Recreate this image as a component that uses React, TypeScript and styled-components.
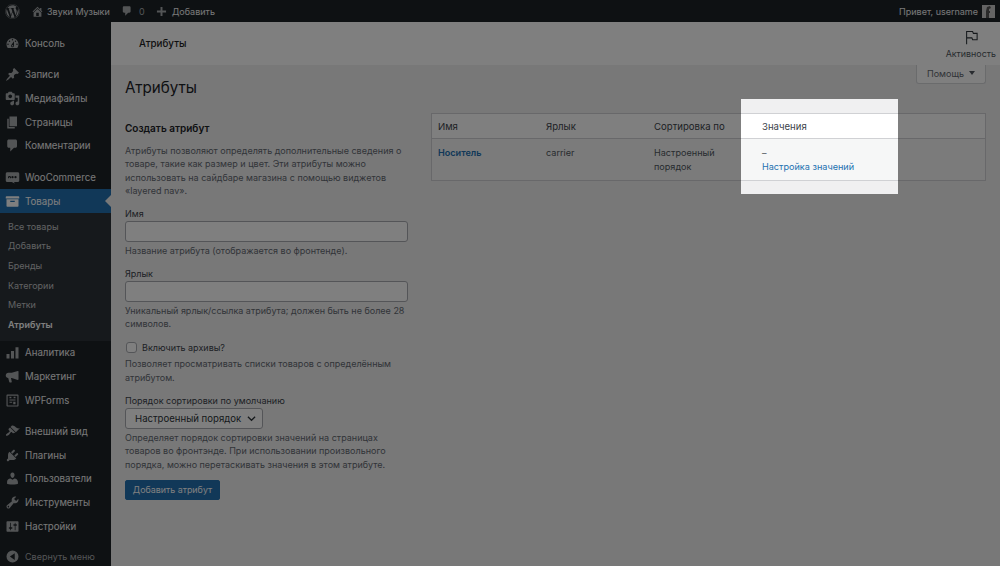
import React from "react";
import styled, { createGlobalStyle } from "styled-components";
import { FaWordpress } from "react-icons/fa";

const GlobalStyle = createGlobalStyle`
  html, body {
    margin: 0;
    padding: 0;
    background: #f0f0f1;
  }
  body {
    font-family: Inter, "Liberation Sans", sans-serif;
    font-size: 9px;
    color: #3c434a;
  }
  * {
    box-sizing: border-box;
  }
`;

const paths: Record<string, string> = {
  dashboard:
    "M3.76 16h12.48c1.1-1.37 1.76-3.11 1.76-5 0-4.42-3.58-8-8-8s-8 3.58-8 8c0 1.89.66 3.63 1.76 5zM10 4c.55 0 1 .45 1 1s-.45 1-1 1-1-.45-1-1 .45-1 1-1zM6 6c.55 0 1 .45 1 1s-.45 1-1 1-1-.45-1-1 .45-1 1-1zm8 0c.55 0 1 .45 1 1s-.45 1-1 1-1-.45-1-1 .45-1 1-1zm-5.37 5.55L12 7v6c0 1.1-.9 2-2 2s-2-.9-2-2c0-.57.24-1.08.63-1.45zM4 10c.55 0 1 .45 1 1s-.45 1-1 1-1-.45-1-1 .45-1 1-1zm12 0c.55 0 1 .45 1 1s-.45 1-1 1-1-.45-1-1 .45-1 1-1zm-5 3c0-.55-.45-1-1-1s-1 .45-1 1 .45 1 1 1 1-.45 1-1z",
  post: "M10.44 3.02l1.82-1.82 6.36 6.35-1.83 1.82c-1.05-.68-2.48-.57-3.41.36l-.75.75c-.92.93-1.04 2.35-.35 3.41l-1.83 1.82-2.41-2.41-2.8 2.79c-.42.42-3.38 2.71-3.8 2.29s1.86-3.39 2.28-3.81l2.79-2.79L4.1 9.36l1.83-1.82c1.05.69 2.48.57 3.4-.36l.75-.75c.93-.92 1.05-2.35.36-3.41z",
  media:
    "M13 11V4c0-.55-.45-1-1-1h-1.67L9 1H5L3.67 3H2c-.55 0-1 .45-1 1v7c0 .55.45 1 1 1h10c.55 0 1-.45 1-1zM7 4.5c1.38 0 2.5 1.12 2.5 2.5S8.38 9.5 7 9.5 4.5 8.38 4.5 7 5.62 4.5 7 4.5zM14 6h5v10.5c0 1.38-1.12 2.5-2.5 2.5S14 17.88 14 16.5s1.12-2.5 2.5-2.5c.17 0 .34.02.5.05V9h-3V6zm-4 8.05V13h2v3.5c0 1.38-1.12 2.5-2.5 2.5S7 17.88 7 16.5 8.12 14 9.5 14c.17 0 .34.02.5.05z",
  page: "M6 15V2h10v13H6zm-1 1h8v2H3V5h2v11z",
  comments:
    "M5 2h9c1.1 0 2 .9 2 2v7c0 1.1-.9 2-2 2h-2l-5 5v-5H5c-1.1 0-2-.9-2-2V4c0-1.1.9-2 2-2z",
  woo: "M3 3h14c1.1 0 2 .9 2 2v9c0 1.1-.9 2-2 2h-5l1 2-4-2H3c-1.1 0-2-.9-2-2V5c0-1.1.9-2 2-2zm1 5v3h1l1-2 1 2h1V8H7.500v1.500L6.500 8h-1L4.700 9.500V8zm6 0a1.500 1.500 0 100 3 1.500 1.500 0 000-3zm4 0a1.500 1.500 0 100 3 1.500 1.500 0 000-3z",
  products:
    "M2 3h16c.55 0 1 .45 1 1v2H1V4c0-.55.45-1 1-1zm0 4h16v9c0 .55-.45 1-1 1H3c-.55 0-1-.45-1-1V7zm5 2v1.500h6V9H7z",
  analytics: "M2 12h4v6H2v-6zm6-4h4v10H8V8zm6-5h4v15h-4V3z",
  marketing:
    "M18 3v11l-1 .5L9 12H8l1 5c.1.5-.2 1-.8 1H6.500c-.4 0-.7-.3-.8-.6L4.300 12C2.500 11.800 1 10.300 1 8.500S2.500 5 4.500 5H9l8-2.500L18 3z",
  wpforms:
    "M3 2h14c.55 0 1 .45 1 1v14c0 .55-.45 1-1 1H3c-.55 0-1-.45-1-1V3c0-.55.45-1 1-1zm.5 1.500v13h13v-13h-13zM6 5h2.500v2H6V5zm5.500 0H14v2h-2.500V5zM6 8.500h8V10H6V8.500zM6 11.500h3.500V13H6v-1.500zm5 0h3V15h-3v-3.500z",
  appearance:
    "M14.48 11.06L7.41 3.99l1.5-1.5c.5-.56 2.3-.47 3.51.32 1.21.8 1.43 1.28 2.91 2.1 1.18.64 2.45 1.26 4.45.85zm-.71.71L6.7 4.7 4.93 6.47c-.39.39-.39 1.02 0 1.41l1.06 1.06c.39.39.39 1.03 0 1.42-.6.6-1.43 1.11-2.21 1.69-.35.26-.7.53-1.01.84C1.43 13.23.91 14.8 1.6 15.5c.69.69 2.29.16 3.63-1.17.31-.31.58-.67.84-1.02.58-.78 1.09-1.61 1.69-2.21.39-.39 1.03-.39 1.42 0l1.06 1.06c.39.39 1.02.39 1.41 0z",
  plugins:
    "M13.11 4.36L9.87 7.6 8 5.73l3.24-3.24c.35-.34 1.05-.2 1.56.32.52.51.66 1.21.31 1.55zm-8 1.77l.91-1.12 9.01 9.01-1.19.84c-.71.71-2.63 1.16-3.82 1.16H6.14L4.9 17.26c-.59.59-1.54.59-2.12 0-.59-.58-.59-1.53 0-2.12l1.24-1.24v-3.88c0-1.13.4-3.19 1.09-3.89zm7.26 3.97l3.24-3.24c.34-.35 1.04-.21 1.55.31.52.51.66 1.21.31 1.55l-3.24 3.25z",
  users:
    "M10 9.25c-2.27 0-2.73-3.44-2.73-3.44C7 4.02 7.82 2 9.97 2c2.16 0 2.98 2.02 2.71 3.81 0 0-.41 3.44-2.68 3.44zm0 2.57L12.72 10c2.39 0 4.52 2.33 4.52 4.53v2.49s-3.65 1.13-7.24 1.13c-3.65 0-7.24-1.13-7.24-1.13v-2.49c0-2.25 1.94-4.48 4.47-4.48z",
  tools:
    "M16.68 9.77c-1.34 1.34-3.3 1.67-4.95.99l-5.41 6.52c-.99.99-2.59.99-3.58 0s-.99-2.59 0-3.57l6.52-5.42c-.68-1.65-.35-3.61.99-4.95 1.28-1.28 3.12-1.62 4.72-1.06l-2.89 2.89 2.82 2.82 2.86-2.87c.53 1.58.18 3.39-1.08 4.65zM3.81 16.21c.4.39 1.04.39 1.43 0 .4-.4.4-1.04 0-1.43-.39-.4-1.03-.4-1.43 0-.39.39-.39 1.03 0 1.43z",
  settings:
    "M18 16V4c0-.55-.45-1-1-1H3c-.55 0-1 .45-1 1v12c0 .55.45 1 1 1h14c.55 0 1-.45 1-1zM8 11h1c.55 0 1 .45 1 1s-.45 1-1 1H8v1.500c0 .28-.22.5-.5.5s-.5-.22-.5-.5V13H6c-.55 0-1-.45-1-1s.45-1 1-1h1V5.500c0-.28.22-.5.5-.5s.5.22.5.5V11zm5-2h-1c-.55 0-1-.45-1-1s.45-1 1-1h1V5.500c0-.28.22-.5.5-.5s.5.22.5.5V7h1c.55 0 1 .45 1 1s-.45 1-1 1h-1v5.500c0 .28-.22.5-.5.5s-.5-.22-.5-.5V9z",
  collapse: "M10 2a8 8 0 100 16 8 8 0 000-16zm3 3.500v9L6.500 10 13 5.500z",
  home: "M16 8.500l1.530 1.530-1.060 1.060L10 4.620l-6.470 6.470-1.060-1.060L10 2.500l4 4v-2h2v4zm-6-2.460l6 5.990V18H4v-5.970zM12 17v-5H8v5h4z",
  plus: "M17 8.500v3h-5.500V17h-3v-5.500H3v-3h5.500V3h3v5.500H17z",
};

const Icon = ({ name, size = 15 }: { name: string; size?: number }) => (
  <svg width={size} height={size} viewBox="0 0 20 20" fill="currentColor">
    <path fillRule="evenodd" d={paths[name]} />
  </svg>
);

const topMenu = [
  { icon: "dashboard", label: "Консоль" },
  { icon: "post", label: "Записи", gap: true },
  { icon: "media", label: "Медиафайлы" },
  { icon: "page", label: "Страницы" },
  { icon: "comments", label: "Комментарии" },
  { icon: "woo", label: "WooCommerce", gap: true },
];

const bottomMenu = [
  { icon: "analytics", label: "Аналитика" },
  { icon: "marketing", label: "Маркетинг" },
  { icon: "wpforms", label: "WPForms" },
  { icon: "appearance", label: "Внешний вид", gap: true },
  { icon: "plugins", label: "Плагины" },
  { icon: "users", label: "Пользователи" },
  { icon: "tools", label: "Инструменты" },
  { icon: "settings", label: "Настройки" },
];

const subMenu = ["Все товары", "Добавить", "Бренды", "Категории", "Метки", "Атрибуты"];

const App = () => {
  return (
    <S.Page>
      <GlobalStyle />
      <S.AdminBar>
        <S.BarGroup>
          <S.BarLogo>
            <FaWordpress size={15} />
          </S.BarLogo>
          <S.BarItem $width={90} $gap={3}>
            <Icon name="home" size={13} />
            <span>Звуки Музыки</span>
          </S.BarItem>
          <S.BarItem $width={34} $gap={6} $muted>
            <Icon name="comments" size={12} />
            <span>0</span>
          </S.BarItem>
          <S.BarItem $width={70} $gap={4}>
            <Icon name="plus" size={13} />
            <span>Добавить</span>
          </S.BarItem>
        </S.BarGroup>
        <S.Greeting>
          <span>Привет, username</span>
          <S.Avatar>
            <svg width="13" height="13" viewBox="0 0 13 13">
              <path fill="#555" d="M4 13V6l1-4 3-1 1 2-2 1v2h1v2H7v5z" />
            </svg>
          </S.Avatar>
        </S.Greeting>
      </S.AdminBar>

      <S.Body>
        <S.Sidebar>
          {topMenu.map((item) => (
            <S.MenuItem key={item.label} $gap={item.gap}>
              <Icon name={item.icon} />
              <span>{item.label}</span>
            </S.MenuItem>
          ))}
          <S.MenuItem $active>
            <Icon name="products" />
            <span>Товары</span>
          </S.MenuItem>
          <S.SubMenu>
            {subMenu.map((label) => (
              <S.SubItem key={label} $current={label === "Атрибуты"}>
                {label}
              </S.SubItem>
            ))}
          </S.SubMenu>
          {bottomMenu.map((item) => (
            <S.MenuItem key={item.label} $gap={item.gap}>
              <Icon name={item.icon} />
              <span>{item.label}</span>
            </S.MenuItem>
          ))}
          <S.Collapse>
            <Icon name="collapse" />
            <span>Свернуть меню</span>
          </S.Collapse>
        </S.Sidebar>

        <S.Main>
          <S.WooHeader>
            <S.WooTitle>Атрибуты</S.WooTitle>
            <S.Activity>
              <svg width="15" height="15" viewBox="0 0 20 20" fill="none" stroke="currentColor" strokeWidth="1.4">
                <path d="M3.500 19V2h8l1 2.500h5v8.500h-6l-1-2.500H3.500" />
              </svg>
              <span>Активность</span>
            </S.Activity>
          </S.WooHeader>

          <S.Content>
            <S.TitleRow>
              <S.PageTitle>Атрибуты</S.PageTitle>
              <S.HelpTab>
                Помощь
                <S.HelpArrow />
              </S.HelpTab>
            </S.TitleRow>

            <S.Columns>
              <S.Form>
                <S.FormTitle>Создать атрибут</S.FormTitle>
                <S.Help>
                  Атрибуты позволяют определять дополнительные сведения о товаре, такие как размер и цвет.
                  Эти атрибуты можно использовать на сайдбаре магазина с помощью виджетов «layered nav».
                </S.Help>

                <S.Field>
                  <S.Label>Имя</S.Label>
                  <S.Input />
                  <S.Help>Название атрибута (отображается во фронтенде).</S.Help>
                </S.Field>

                <S.Field>
                  <S.Label>Ярлык</S.Label>
                  <S.Input />
                  <S.Help>Уникальный ярлык/ссылка атрибута; должен быть не более 28 символов.</S.Help>
                </S.Field>

                <S.Field>
                  <S.CheckRow>
                    <S.Check />
                    <span>Включить архивы?</span>
                  </S.CheckRow>
                  <S.Help>Позволяет просматривать списки товаров с определённым атрибутом.</S.Help>
                </S.Field>

                <S.Field>
                  <S.Label>Порядок сортировки по умолчанию</S.Label>
                  <S.Select>
                    <span>Настроенный порядок</span>
                    <svg width="9" height="9" viewBox="0 0 10 10" fill="none" stroke="currentColor" strokeWidth="1.400">
                      <path d="M1 3l4 4 4-4" />
                    </svg>
                  </S.Select>
                  <S.Help>
                    Определяет порядок сортировки значений на страницах товаров во фронтэнде. При
                    использовании произвольного порядка, можно перетаскивать значения в этом атрибуте.
                  </S.Help>
                </S.Field>

                <S.Submit>Добавить атрибут</S.Submit>
              </S.Form>

              <S.Table>
                <S.HeadCell>Имя</S.HeadCell>
                <S.HeadCell>Ярлык</S.HeadCell>
                <S.HeadCell>Сортировка по</S.HeadCell>
                <S.HeadCell>Значения</S.HeadCell>
                <S.Cell>
                  <S.StrongLink>Носитель</S.StrongLink>
                </S.Cell>
                <S.Cell>carrier</S.Cell>
                <S.Cell>Настроенный порядок</S.Cell>
                <S.Cell>
                  <div>–</div>
                  <S.TableLink>Настройка значений</S.TableLink>
                </S.Cell>
              </S.Table>
            </S.Columns>
          </S.Content>
        </S.Main>
      </S.Body>

      <S.Spotlight />
    </S.Page>
  );
};

const S = {
  Page: styled.div`
    position: relative;
    width: 1000px;
    height: 566px;
    overflow: hidden;
    display: flex;
    flex-direction: column;
  `,

  AdminBar: styled.header`
    height: 22px;
    flex: none;
    background-color: #1d2327;
    color: #f0f0f1;
    display: flex;
    align-items: center;
    justify-content: space-between;
    padding: 0 5px;
    font-size: 9px;
  `,

  BarGroup: styled.div`
    display: flex;
    align-items: center;
  `,

  BarLogo: styled.div`
    width: 26px;
    display: flex;
    color: #a7aaad;
  `,

  BarItem: styled.div<{ $width: number; $gap: number; $muted?: boolean }>`
    width: ${({ $width }) => $width}px;
    display: flex;
    align-items: center;
    gap: ${({ $gap }) => $gap}px;

    svg {
      color: #a7aaad;
      flex: none;
    }

    span {
      color: ${({ $muted }) => ($muted ? "#a7aaad" : "#f0f0f1")};
      white-space: nowrap;
    }
  `,

  Greeting: styled.div`
    display: flex;
    align-items: center;
    gap: 4px;
  `,

  Avatar: styled.div`
    width: 13px;
    height: 13px;
    background-color: #c9c9c9;
    display: flex;
  `,

  Body: styled.div`
    flex: 1;
    display: flex;
    min-height: 0;
  `,

  Sidebar: styled.nav`
    width: 111px;
    flex: none;
    background-color: #1d2327;
    color: #f0f0f1;
    padding-top: 9.700px;
  `,

  MenuItem: styled.div<{ $gap?: boolean; $active?: boolean }>`
    position: relative;
    height: 23.700px;
    margin-top: ${({ $gap }) => ($gap ? "7.700px" : "0")};
    padding-left: 5px;
    display: flex;
    align-items: center;
    gap: 5px;
    font-size: 9.7px;
    white-space: nowrap;
    background-color: ${({ $active }) => ($active ? "#2271b1" : "transparent")};
    color: ${({ $active }) => ($active ? "#fff" : "#f0f0f1")};

    svg {
      flex: none;
      color: ${({ $active }) => ($active ? "#fff" : "#a7aaad")};
    }

    ${({ $active }) =>
      $active &&
      `&::after {
        content: "";
        position: absolute;
        right: 0;
        top: 50%;
        margin-top: -6px;
        border: 6px solid transparent;
        border-right-color: #f0f0f1;
      }`}
  `,

  SubMenu: styled.div`
    background-color: #2c3338;
    padding: 3.500px 0 6.500px;
  `,

  SubItem: styled.div<{ $current?: boolean }>`
    height: 19.700px;
    padding-left: 8px;
    display: flex;
    align-items: center;
    font-size: 9px;
    font-weight: ${({ $current }) => ($current ? 600 : 400)};
    color: ${({ $current }) => ($current ? "#fff" : "#c3c4c7")};
  `,

  Collapse: styled.div`
    height: 24px;
    margin-top: 6px;
    padding-left: 5px;
    display: flex;
    align-items: center;
    gap: 5px;
    font-size: 9px;
    color: #a7aaad;
    white-space: nowrap;
  `,

  Main: styled.main`
    flex: 1;
    min-width: 0;
    background-color: #f0f0f1;
  `,

  WooHeader: styled.div`
    height: 43px;
    background-color: #fff;
    padding-left: 28px;
    padding-right: 4px;
    display: flex;
    align-items: center;
    justify-content: space-between;
  `,

  WooTitle: styled.div`
    font-size: 9.800px;
    font-weight: 500;
    color: #1e1e1e;
  `,

  Activity: styled.div`
    display: flex;
    flex-direction: column;
    align-items: center;
    gap: 3px;
    padding-top: 1px;
    font-size: 8.900px;
    color: #50575e;

    svg {
      color: #2c3338;
      margin-left: 2px;
    }
  `,

  Content: styled.div`
    padding: 0 14px;
  `,

  TitleRow: styled.div`
    display: flex;
    justify-content: space-between;
    align-items: flex-start;
  `,

  PageTitle: styled.h1`
    margin: 13px 0 0;
    font-size: 15.200px;
    line-height: 20px;
    font-weight: 400;
    color: #1d2327;
  `,

  HelpTab: styled.div`
    width: 70px;
    height: 19px;
    padding-bottom: 2px;
    background-color: #fff;
    border: 1px solid #d5d6d9;
    border-top: none;
    border-radius: 0 0 3px 3px;
    display: flex;
    align-items: center;
    justify-content: center;
    gap: 5px;
    font-size: 9px;
    color: #646970;
  `,

  HelpArrow: styled.span`
    border: 3px solid transparent;
    border-top: 4px solid #50575e;
    border-bottom: none;
  `,

  Columns: styled.div`
    display: flex;
    align-items: flex-start;
    gap: 23px;
    margin-top: 15px;
  `,

  Form: styled.form`
    width: 283px;
    flex: none;
    padding-top: 8px;
  `,

  FormTitle: styled.h2`
    margin: 0 0 8.500px;
    font-size: 10px;
    line-height: 14px;
    font-weight: 600;
    color: #1d2327;
  `,

  Help: styled.p`
    margin: 0;
    font-size: 9px;
    line-height: 13.600px;
    color: #646970;
  `,

  Field: styled.div`
    margin-top: 9.500px;
  `,

  Label: styled.label`
    display: block;
    font-size: 9px;
    line-height: 13.600px;
    color: #3c434a;
  `,

  Input: styled.input`
    display: block;
    width: 100%;
    height: 21px;
    margin: 0 0 2px;
    border: 1px solid #a9abb0;
    border-radius: 3px;
    background-color: #fff;
  `,

  CheckRow: styled.label`
    display: flex;
    align-items: center;
    gap: 5px;
    height: 15px;
    margin-bottom: 2px;
    font-size: 9px;
    color: #3c434a;
  `,

  Check: styled.span`
    width: 11px;
    height: 11px;
    margin-left: 1px;
    background-color: #fff;
    border: 1px solid #a9abb0;
    border-radius: 3px;
  `,

  Select: styled.div`
    width: 138px;
    height: 21px;
    margin-bottom: 2px;
    padding: 0 6px 0 9px;
    background-color: #fff;
    border: 1px solid #a9abb0;
    border-radius: 3px;
    display: flex;
    align-items: center;
    justify-content: space-between;
    font-size: 9.600px;
    color: #2c3338;
  `,

  Submit: styled.button`
    display: block;
    width: 95px;
    height: 20px;
    margin-top: 8.500px;
    padding: 0;
    background-color: #2271b1;
    border: 1px solid #2271b1;
    border-radius: 2px;
    color: #fff;
    font-family: inherit;
    font-size: 8.900px;
  `,

  Table: styled.div`
    flex: 1;
    display: grid;
    grid-template-columns: 108px 108px 108px 1fr;
    background-color: #f6f7f7;
    border: 1px solid #d0d1d4;
  `,

  HeadCell: styled.div`
    height: 25px;
    padding-left: 6px;
    display: flex;
    align-items: center;
    background-color: #fff;
    border-bottom: 1px solid #d0d1d4;
    font-size: 9.600px;
    color: #3c434a;
  `,

  Cell: styled.div`
    height: 41px;
    padding: 7px 6px 0;
    font-size: 9.100px;
    line-height: 13.600px;
    color: #50575e;
  `,

  StrongLink: styled.a`
    color: #2271b1;
    font-weight: 600;
  `,

  TableLink: styled.a`
    display: block;
    color: #2271b1;
  `,

  Spotlight: styled.div`
    position: absolute;
    left: 741px;
    top: 99px;
    width: 157px;
    height: 95px;
    box-shadow: 0 0 0 2000px rgba(0, 0, 0, 0.5);
  `,
};

export default App;
